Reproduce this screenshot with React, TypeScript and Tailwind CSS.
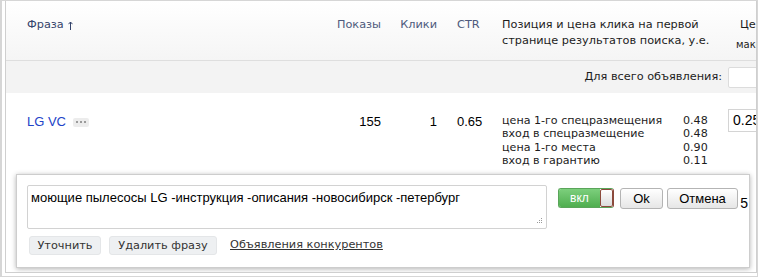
import React from 'react';

const sans = { fontFamily: '"DejaVu Sans", Verdana, sans-serif' };
const arial = { fontFamily: '"Liberation Sans", Arial, sans-serif' };

const POSITIONS = [
  { label: 'цена 1-го спецразмещения', value: '0.48' },
  { label: 'вход в спецразмещение', value: '0.48' },
  { label: 'цена 1-го места', value: '0.90' },
  { label: 'вход в гарантию', value: '0.11' },
];

const App: React.FC = () => {
  return (
    <div className="w-[758px] h-[277px] overflow-hidden bg-white border-t border-r border-b border-l-2 border-[#d6d6d6]">
      <div className="relative h-[272px] ml-[3px] border-l border-r border-b border-[#cfcfcf] overflow-hidden" style={sans}>
        {/* Header */}
        <div className="flex items-start h-[60px] pt-[16px] border-b border-[#dedede] bg-gradient-to-b from-white to-[#f5f5f5] text-[11.3px] leading-[16px]">
          <div className="w-[314px] h-[16px] shrink-0 pl-[21px] text-[#34436a] flex items-center">
            Фраза
            <svg className="ml-[4px]" width="5" height="9" viewBox="0 0 5 9">
              <path d="M2.5 1 V9 M0.5 3.2 L2.5 1 L4.5 3.2" stroke="#34436a" strokeWidth="1" fill="none" />
            </svg>
          </div>
          <div className="w-[61px] shrink-0 text-right text-[#4e5a7c]">Показы</div>
          <div className="w-[56px] shrink-0 text-right text-[#4e5a7c]">Клики</div>
          <div className="w-[45px] shrink-0 pl-[20px] text-[#4e5a7c]">CTR</div>
          <div className="w-[238px] shrink-0 pl-[20px] text-[#1c1c1c] whitespace-nowrap">
            Позиция и цена клика на первой
            <br />
            странице результатов поиска, у.е.
          </div>
          <div className="shrink-0 pl-[20px] text-[#1c1c1c] whitespace-nowrap">
            <div>Цена</div>
            <div className="text-[10px] leading-[14px] mt-[5px] -ml-[4px]">макс.</div>
          </div>
        </div>

        {/* Whole-ad row */}
        <div className="flex items-center h-[32px] bg-[#f3f3f3] text-[11.3px] text-[#1c1c1c]">
          <div className="w-[716px] shrink-0 text-right">Для всего объявления:</div>
          <div className="ml-[6px] w-[40px] h-[21px] shrink-0 bg-white border border-[#dcdcdc] rounded-[2px]" />
        </div>

        {/* Phrase row */}
        <div className="flex items-start pt-[20px]">
          <div className="w-[314px] shrink-0 pl-[21px] flex items-center gap-[7px] leading-[18px]">
            <span className="text-[13px] text-[#2243c8]" style={arial}>LG VC</span>
            <span className="flex items-center justify-center gap-[2px] w-[16px] h-[9px] rounded-[2px] bg-[#ececec]">
              <span className="w-[2px] h-[2px] bg-[#9a9a9a]" />
              <span className="w-[2px] h-[2px] bg-[#9a9a9a]" />
              <span className="w-[2px] h-[2px] bg-[#9a9a9a]" />
            </span>
          </div>
          <div className="w-[61px] shrink-0 text-right text-[13px] leading-[18px] text-black" style={arial}>155</div>
          <div className="w-[56px] shrink-0 text-right text-[13px] leading-[18px] text-black" style={arial}>1</div>
          <div className="w-[45px] shrink-0 pl-[20px] text-[13px] leading-[18px] text-black" style={arial}>0.65</div>
          <div className="w-[238px] shrink-0 pl-[20px] pt-[1px] text-[11.1px] leading-[13.3px] text-[#1c1c1c]">
            {POSITIONS.map((p) => (
              <div key={p.label} className="flex">
                <span className="w-[181px] shrink-0">{p.label}</span>
                <span>{p.value}</span>
              </div>
            ))}
          </div>
          <div className="shrink-0 pl-[8px] -mt-[4px]">
            <div className="w-[60px] h-[23px] border border-[#d4d4d4] bg-white pl-[4px] text-[14px] leading-[21px] text-black" style={arial}>0.25</div>
          </div>
        </div>

        {/* Edit popup */}
        <div className="absolute left-[10px] top-[173px] w-[734px] h-[94px] bg-white border border-[#cdcdcd] shadow-[0_1px_5px_rgba(0,0,0,0.3)] px-[10px] pt-[10px]">
          <div className="flex items-start">
            <div className="relative w-[520px] h-[44px] border border-[#d2d2d2] rounded-[2px] px-[3px] pt-[4px] text-[13px] leading-[16px] text-black" style={arial}>
              моющие пылесосы LG -инструкция -описания -новосибирск -петербург
              <svg className="absolute right-[3px] bottom-[3px]" width="7" height="7" viewBox="0 0 7 7">
                <rect x="5" y="0" width="1" height="1" fill="#9a9a9a" />
                <rect x="3" y="2" width="1" height="1" fill="#9a9a9a" />
                <rect x="5" y="2" width="1" height="1" fill="#9a9a9a" />
                <rect x="1" y="4" width="1" height="1" fill="#9a9a9a" />
                <rect x="3" y="4" width="1" height="1" fill="#9a9a9a" />
                <rect x="5" y="4" width="1" height="1" fill="#9a9a9a" />
              </svg>
            </div>
            <div className="ml-[11px] mt-[3px] flex h-[20px] w-[56px] rounded-[3px] overflow-hidden border border-[#8c4a3c] border-l-[#5aa55a] border-t-[#5aa55a] border-b-[#5aa55a]">
              <div className="flex-1 flex items-center justify-center bg-gradient-to-b from-[#7ccf7c] to-[#4fae4f] text-white text-[12px]" style={arial}>вкл</div>
              <div className="w-[13px] bg-gradient-to-b from-white to-[#dcdcdc] border border-[#8c4a3c] rounded-[2px]" />
            </div>
            <button className="ml-[6px] mt-[3px] w-[43px] h-[21px] rounded-[3px] border border-[#b4b4b4] bg-gradient-to-b from-white to-[#e6e6e6] text-[13px] leading-[19px] text-black" style={arial}>Ok</button>
            <button className="ml-[4px] mt-[3px] w-[71px] h-[21px] rounded-[3px] border border-[#b4b4b4] bg-gradient-to-b from-white to-[#e6e6e6] text-[13px] leading-[19px] text-black" style={arial}>Отмена</button>
          </div>
          <div className="flex items-center mt-[7px] text-[11.3px] text-[#333]">
            <button className="ml-[2px] w-[72px] h-[19px] rounded-[3px] border border-[#e4e6e8] bg-[#eef0f2] leading-[17px] text-[#333]">Уточнить</button>
            <button className="ml-[8px] w-[108px] h-[19px] rounded-[3px] border border-[#e4e6e8] bg-[#eef0f2] leading-[17px] text-[#333]">Удалить фразу</button>
            <span className="ml-[13px] underline text-[#333]">Объявления конкурентов</span>
          </div>
          <span className="absolute right-[1px] top-[18px] text-[14px] text-black" style={arial}>5</span>
        </div>
      </div>
    </div>
  );
};

export default App;
